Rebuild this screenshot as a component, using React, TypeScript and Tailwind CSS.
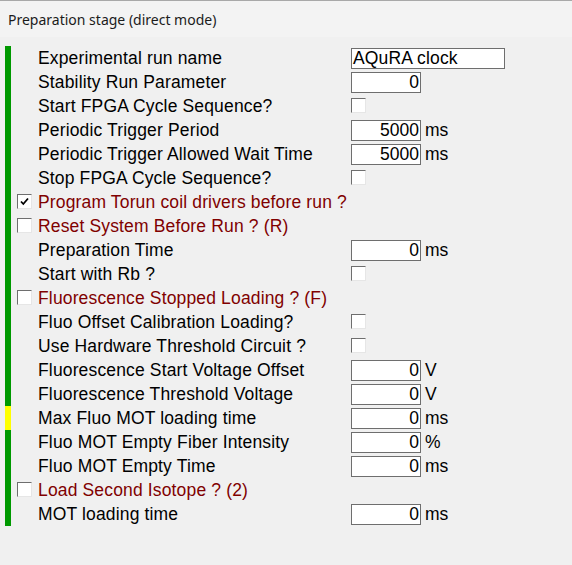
import React from "react";

type Row = {
  label: string;
  red?: boolean;
  leftCheck?: boolean;
  leftChecked?: boolean;
  kind?: "text" | "num" | "check" | "none";
  value?: string;
  unit?: string;
  bar?: "green" | "yellow";
};

const rows: Row[] = [
  { label: "Experimental run name", kind: "text", value: "AQuRA clock" },
  { label: "Stability Run Parameter", kind: "num", value: "0" },
  { label: "Start FPGA Cycle Sequence?", kind: "check" },
  { label: "Periodic Trigger Period", kind: "num", value: "5000", unit: "ms" },
  { label: "Periodic Trigger Allowed Wait Time", kind: "num", value: "5000", unit: "ms" },
  { label: "Stop FPGA Cycle Sequence?", kind: "check" },
  { label: "Program Torun coil drivers before run ?", red: true, leftCheck: true, leftChecked: true, kind: "none" },
  { label: "Reset System Before Run ? (R)", red: true, leftCheck: true, kind: "none" },
  { label: "Preparation Time", kind: "num", value: "0", unit: "ms" },
  { label: "Start with Rb ?", kind: "check" },
  { label: "Fluorescence Stopped Loading ? (F)", red: true, leftCheck: true, kind: "none" },
  { label: "Fluo Offset Calibration Loading?", kind: "check" },
  { label: "Use Hardware Threshold Circuit ?", kind: "check" },
  { label: "Fluorescence Start Voltage Offset", kind: "num", value: "0", unit: "V" },
  { label: "Fluorescence Threshold Voltage", kind: "num", value: "0", unit: "V" },
  { label: "Max Fluo MOT loading time", kind: "num", value: "0", unit: "ms", bar: "yellow" },
  { label: "Fluo MOT Empty Fiber Intensity", kind: "num", value: "0", unit: "%" },
  { label: "Fluo MOT Empty Time", kind: "num", value: "0", unit: "ms" },
  { label: "Load Second Isotope ? (2)", red: true, leftCheck: true, kind: "none" },
  { label: "MOT loading time", kind: "num", value: "0", unit: "ms" },
];

function CheckBox({ checked }: { checked?: boolean }) {
  return (
    <div className="w-[15px] h-[15px] bg-white border border-t-[#6e6e6e] border-l-[#6e6e6e] border-b-[#e6e6e6] border-r-[#e6e6e6] flex items-center justify-center">
      {checked && (
        <svg width="11" height="11" viewBox="0 0 11 11">
          <path d="M2 5.5 L4.3 8 L9 2.5" stroke="#000" strokeWidth="1.8" fill="none" />
        </svg>
      )}
    </div>
  );
}

export default function App() {
  return (
    <div
      className="w-[572px] h-[565px] bg-[#f0f0f0] border-t border-[#a8a8a8] text-black overflow-hidden"
      style={{ fontFamily: '"Liberation Sans", Arial, sans-serif' }}
    >
      <div
        className="h-[36px] bg-[#f3f3f3] flex items-center pl-[8px] text-[14px] text-[#1b1b1b]"
        style={{ fontFamily: '"Noto Sans", "Open Sans", sans-serif' }}
      >
        Preparation stage (direct mode)
      </div>
      <div className="pt-[9px]">
        {rows.map((r, i) => (
          <div key={i} className="flex items-stretch h-[24px]">
            <div className="ml-[5px] w-[6px] bg-[#009900]">
              {r.bar === "yellow" && <div className="w-full h-full bg-[#ffff00]" />}
            </div>
            <div className="ml-[6px] w-[15px] pt-[4px]">
              {r.leftCheck && <CheckBox checked={r.leftChecked} />}
            </div>
            <div
              className={`ml-[6px] w-[313px] pt-[2px] flex items-center text-[17.5px] tracking-[0.15px] leading-none whitespace-nowrap ${
                r.red ? "text-[#800000]" : "text-black"
              }`}
            >
              {r.label}
            </div>
            <div className="flex items-start">
              {r.kind === "text" && (
                <div className="mt-[2px] w-[154px] h-[21px] bg-white border border-[#6e6e6e] flex items-center pt-[1px] pl-[1px] text-[17.5px] tracking-[0.15px] leading-none">
                  {r.value}
                </div>
              )}
              {r.kind === "num" && (
                <div className="mt-[2px] w-[70px] h-[21px] bg-white border border-[#6e6e6e] flex items-center justify-end pt-[1px] pr-[1px] text-[17.5px] leading-none">
                  {r.value}
                </div>
              )}
              {r.kind === "check" && (
                <div className="mt-[4px]">
                  <CheckBox />
                </div>
              )}
              {r.unit && (
                <div className="ml-[4px] h-[24px] pt-[2px] flex items-center text-[17.5px] leading-none">
                  {r.unit}
                </div>
              )}
            </div>
          </div>
        ))}
      </div>
    </div>
  );
}
